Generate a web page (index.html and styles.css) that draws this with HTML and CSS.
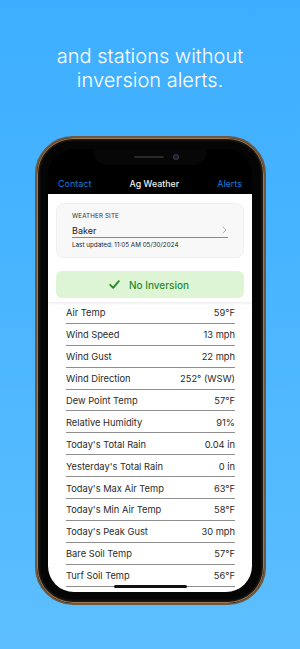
FILE: index.html
```html
<!DOCTYPE html>
<html lang="en">
<head>
<meta charset="utf-8">
<title>Ag Weather</title>
<link rel="stylesheet" href="styles.css">
</head>
<body>
<main class="page">
  <h1 class="headline">and stations without<br>inversion alerts.</h1>
  <div class="phone">
    <div class="screen">
      <div class="topbar">
        <div class="notch"><span class="speaker"></span><span class="camera"></span></div>
        <nav class="navbar">
          <span class="nav-link">Contact</span>
          <span class="nav-title">Ag Weather</span>
          <span class="nav-link">Alerts</span>
        </nav>
      </div>
      <div class="content">
        <section class="header">
          <div class="site-card">
            <div class="site-label">WEATHER SITE</div>
            <div class="site-select">
              <span>Baker</span>
              <svg class="chevron" width="5" height="8" viewBox="0 0 5 8"><path d="M1 1l3 3-3 3" fill="none" stroke="#b0b0b0" stroke-width="0.9" stroke-linecap="round" stroke-linejoin="round"/></svg>
            </div>
            <div class="updated">Last updated: 11:05 AM 05/30/2024</div>
          </div>
          <div class="status">
            <svg class="check" width="11" height="9" viewBox="0 0 11 9"><path d="M1.2 4.8l3 3L9.8 1.2" fill="none" stroke="#2b8a2b" stroke-width="1.9" stroke-linecap="round" stroke-linejoin="round"/></svg>
            <span>No Inversion</span>
          </div>
        </section>
        <ul class="readings">
          <li><span>Air Temp</span><span>59°F</span></li>
          <li><span>Wind Speed</span><span>13 mph</span></li>
          <li><span>Wind Gust</span><span>22 mph</span></li>
          <li><span>Wind Direction</span><span>252° (WSW)</span></li>
          <li><span>Dew Point Temp</span><span>57°F</span></li>
          <li><span>Relative Humidity</span><span>91%</span></li>
          <li><span>Today's Total Rain</span><span>0.04 in</span></li>
          <li><span>Yesterday's Total Rain</span><span>0 in</span></li>
          <li><span>Today's Max Air Temp</span><span>63°F</span></li>
          <li><span>Today's Min Air Temp</span><span>58°F</span></li>
          <li><span>Today's Peak Gust</span><span>30 mph</span></li>
          <li><span>Bare Soil Temp</span><span>57°F</span></li>
          <li><span>Turf Soil Temp</span><span>56°F</span></li>
        </ul>
        <div class="home-indicator"></div>
      </div>
    </div>
  </div>
</main>
</body>
</html>
```
FILE: styles.css
```css
* { box-sizing: border-box; }
html, body {
  margin: 0;
  padding: 0;
  width: 300px;
  height: 649px;
  overflow: hidden;
}
body {
  font-family: Inter, "Liberation Sans", sans-serif;
  background: linear-gradient(180deg, #3daeff 0%, #4bb6ff 50%, #5dbfff 100%);
}
.page {
  display: flex;
  flex-direction: column;
  align-items: center;
  height: 649px;
}
.headline {
  margin: 44px 0 0;
  font-size: 20px;
  line-height: 24px;
  font-weight: 300;
  color: #ffffff;
  text-align: center;
  letter-spacing: 0;
}
.phone {
  margin-top: 44px;
  margin-left: 1px;
  width: 231px;
  height: 469px;
  border-radius: 38px;
  border: 2px solid #6f583f;
  background: #050505;
  box-shadow: inset 0 0 0 1px #9a7b55, inset 0 0 0 2.5px #1e1912, inset 0 0 0 4px #0a0a0a;
  padding: 11px 12px 11px 11px;
  display: flex;
}
.screen {
  position: relative;
  flex: 1;
  border-radius: 26px;
  overflow: hidden;
  background: #000;
  display: flex;
  flex-direction: column;
}
.topbar {
  height: 45px;
  display: flex;
  flex-direction: column;
  align-items: center;
  flex-shrink: 0;
}
.notch {
  width: 112px;
  height: 16px;
  background: #070707;
  border-radius: 0 0 12px 12px;
  display: flex;
  align-items: center;
  justify-content: center;
  gap: 9px;
  padding-left: 12px;
}
.speaker {
  width: 30px;
  height: 2.5px;
  border-radius: 2px;
  background: #2a2a2a;
}
.camera {
  width: 6px;
  height: 6px;
  border-radius: 50%;
  background: #1c1e2a;
  box-shadow: inset 0 0 0 1px #30323f;
}
.navbar {
  margin-top: auto;
  height: 22px;
  width: 100%;
  display: flex;
  align-items: center;
  justify-content: space-between;
  padding: 0 10px 0 10px;
  font-size: 9px;
}
.nav-link {
  color: #1b78dd;
}
.nav-title {
  color: #f2f2f2;
  font-weight: 500;
  font-size: 8.8px;
}
.content {
  flex: 1;
  background: #ffffff;
  display: flex;
  flex-direction: column;
}
.header {
  padding: 9px 8px 4px;
  display: flex;
  flex-direction: column;
  gap: 13px;
  box-shadow: 0 1px 3px rgba(0, 0, 0, 0.10);
  position: relative;
  z-index: 1;
  background: #fff;
}
.site-card {
  height: 55px;
  border-radius: 8px;
  background: #f8f8f8;
  border: 1px solid #efefef;
  padding: 8px 15px 0 15px;
  color: #222;
}
.site-label {
  font-size: 6.3px;
  line-height: 9px;
  color: #333;
  letter-spacing: 0.1px;
}
.site-select {
  margin-top: 3px;
  height: 14px;
  display: flex;
  align-items: center;
  justify-content: space-between;
  font-size: 9px;
  border-bottom: 1px solid #8a8a8a;
  padding-bottom: 1px;
}
.chevron { margin-right: 1px; }
.updated {
  margin-top: 3px;
  font-size: 6.3px;
  color: #222;
}
.status {
  height: 27px;
  border-radius: 6px;
  background: #def5d5;
  display: flex;
  align-items: center;
  justify-content: center;
  gap: 9px;
  color: #2a8a2a;
  font-size: 10px;
  font-weight: 500;
  padding-right: 2px;
}
.readings {
  list-style: none;
  margin: 0;
  padding: 0 17px 0 18px;
}
.readings li {
  height: 21.9px;
  display: flex;
  align-items: center;
  justify-content: space-between;
  border-bottom: 1px solid #8e8e8e;
  font-size: 9.3px;
  color: #2a2a2a;
  padding-top: 1px;
}
.home-indicator {
  position: absolute;
  left: 66px;
  bottom: 4px;
  width: 73px;
  height: 3px;
  border-radius: 2px;
  background: #111;
}
```
